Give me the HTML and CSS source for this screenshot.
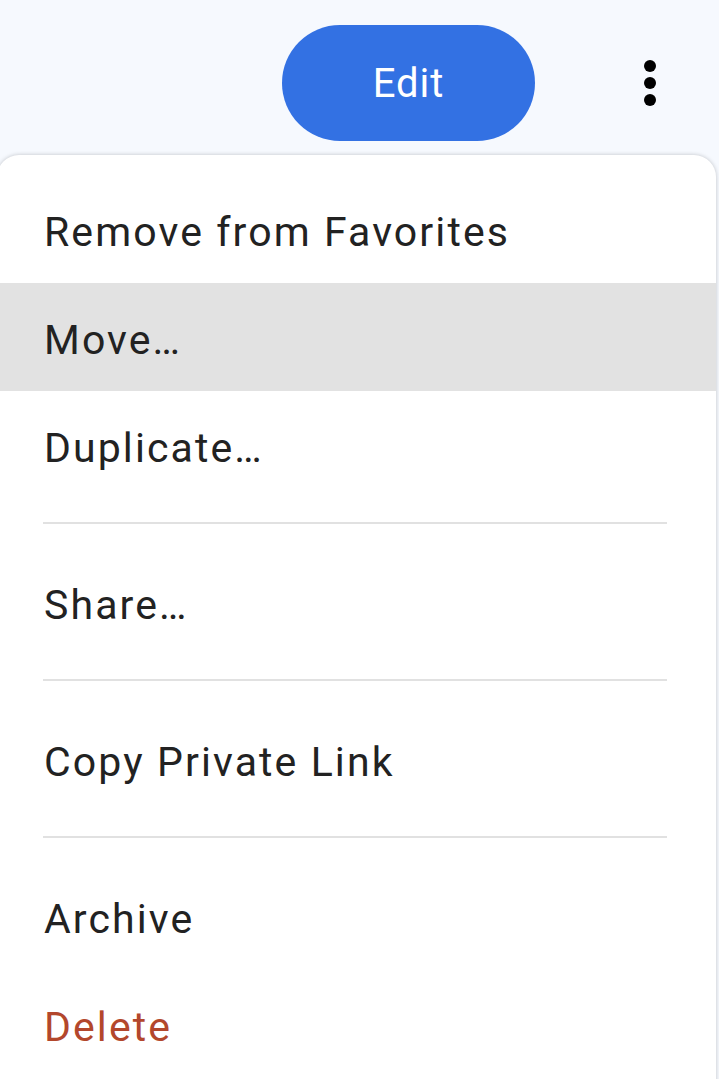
FILE: index.html
```html
<!DOCTYPE html>
<html lang="en">
<head>
    <title>Item actions</title>
    <link rel="stylesheet" href="styles.css">
</head>
<body>

<div class="topbar">
    <button type="button" class="edit-btn">Edit</button>
    <button type="button" class="more-btn" aria-label="More">
        <svg width="14" height="48" viewBox="0 0 14 48">
            <circle cx="7" cy="7" r="6"></circle>
            <circle cx="7" cy="24" r="6"></circle>
            <circle cx="7" cy="41" r="6"></circle>
        </svg>
    </button>
</div>

<div class="menu">
    <ul class="menu-group">
        <li class="menu-item">Remove from Favorites</li>
        <li class="menu-item active">Move…</li>
        <li class="menu-item">Duplicate…</li>
    </ul>
    <hr class="divider">
    <ul class="menu-group">
        <li class="menu-item">Share…</li>
    </ul>
    <hr class="divider">
    <ul class="menu-group">
        <li class="menu-item">Copy Private Link</li>
    </ul>
    <hr class="divider">
    <ul class="menu-group">
        <li class="menu-item">Archive</li>
        <li class="menu-item danger">Delete</li>
    </ul>
</div>

</body>
</html>
```

FILE: styles.css
```css
html, body {
  margin: 0;
  padding: 0;
  height: 100%;
  overflow: hidden;
}
body {
  font-family: Roboto, "Noto Sans", sans-serif;
  background-color: #f6f9fe;
  color: #222222;
}
.topbar {
  display: flex;
  justify-content: flex-end;
  align-items: center;
  height: 116px;
  padding: 25px 45px 14px 0;
  gap: 91px;
}
.edit-btn {
  width: 253px;
  height: 116px;
  border: none;
  border-radius: 58px;
  background-color: #3371e3;
  color: white;
  font-family: Roboto, sans-serif;
  font-size: 40px;
  letter-spacing: 1px;
  padding: 0;
}
.more-btn {
  width: 48px;
  height: 48px;
  border: none;
  background: none;
  padding: 0;
  display: flex;
  align-items: center;
  justify-content: center;
}
.more-btn svg {
  fill: black;
}
.menu {
  margin-left: -3px;
  width: 719px;
  height: 940px;
  background-color: white;
  border-radius: 22px 22px 0 0;
  box-shadow: 0 0 4px rgba(0, 0, 0, 0.22);
  padding-top: 20px;
}
.menu-group {
  list-style: none;
  margin: 0;
  padding: 0;
}
.menu-item {
  font-size: 41px;
  line-height: 48px;
  letter-spacing: 2.1px;
  padding: 33px 0 27px 47px;
  color: #222222;
}
.menu-item.active {
  background-color: #e2e2e2;
}
.menu-item.danger {
  color: #b3472c;
}
.divider {
  border: none;
  height: 2px;
  background-color: #e1e1e1;
  margin: 23px 49px 24px 46px;
}
```
